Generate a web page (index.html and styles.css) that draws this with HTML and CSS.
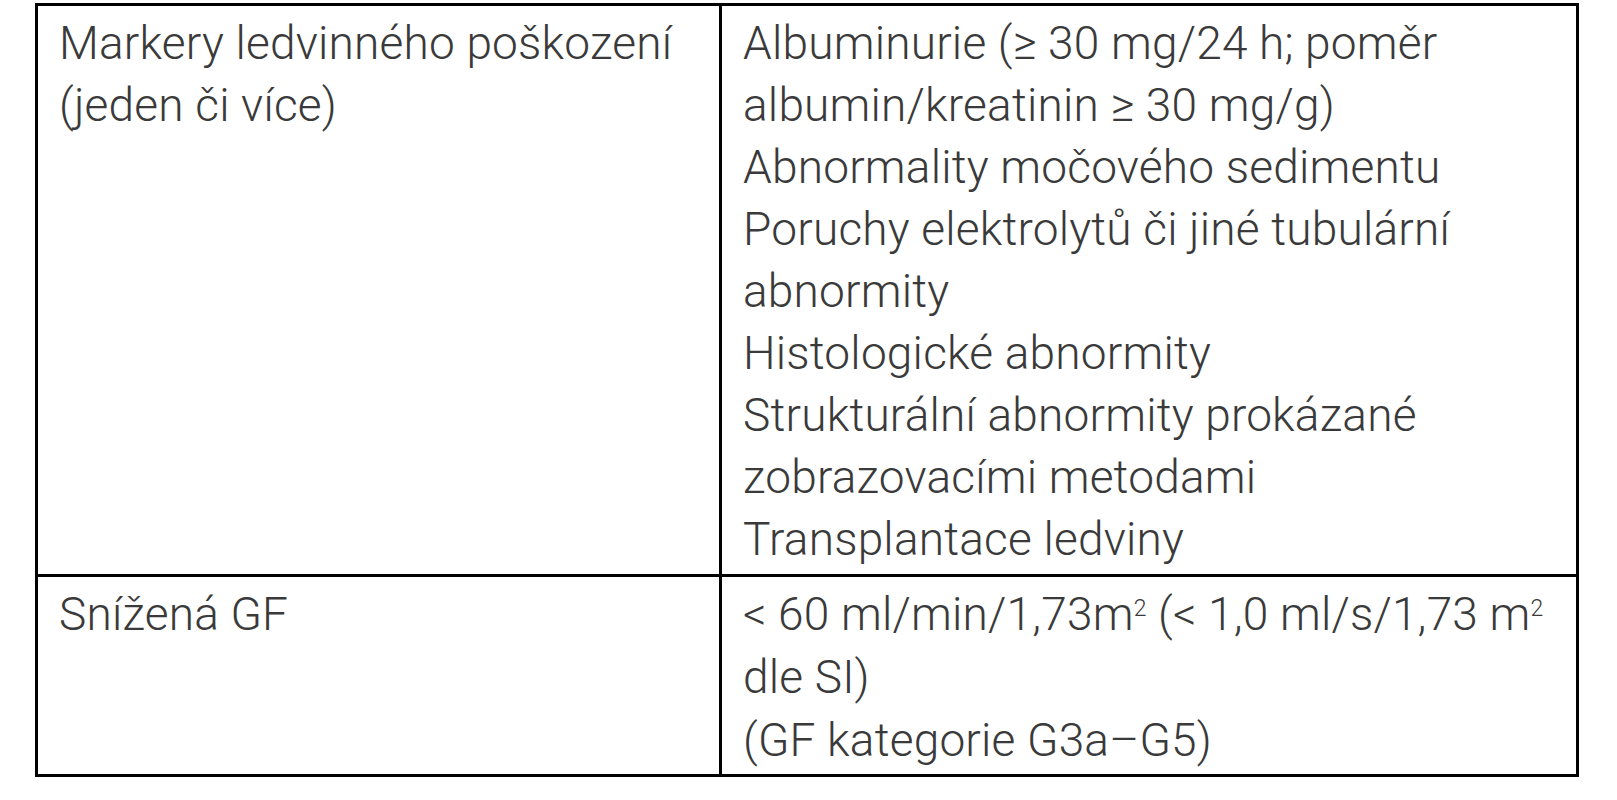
FILE: index.html
```html
<!DOCTYPE html>
<html lang="cs">
<head>
<meta charset="utf-8">
<title>Kritéria CKD</title>
<link rel="stylesheet" href="styles.css">
</head>
<body>
<table class="criteria">
  <tr>
    <td class="label">Markery ledvinného poškození (jeden či více)</td>
    <td class="values">
      <div class="item">Albuminurie (≥ 30 mg/24 h; poměr albumin/kreatinin ≥ 30 mg/g)</div>
      <div class="item">Abnormality močového sedimentu</div>
      <div class="item">Poruchy elektrolytů či jiné tubulární abnormity</div>
      <div class="item">Histologické abnormity</div>
      <div class="item">Strukturální abnormity prokázané zobrazovacími metodami</div>
      <div class="item">Transplantace ledviny</div>
    </td>
  </tr>
  <tr class="second">
    <td class="label">Snížená GF</td>
    <td class="values">
      <div class="item">&lt; 60 ml/min/1,73m<sup>2</sup> (&lt; 1,0 ml/s/1,73 m<sup>2</sup> <span class="nowrap">dle SI)</span></div>
      <div class="item">(GF kategorie G3a–G5)</div>
    </td>
  </tr>
</table>
</body>
</html>
```

FILE: styles.css
```css
html, body {
  margin: 0;
  padding: 0;
  background: #ffffff;
}

body {
  padding: 3px 0 0 35px;
  font-family: Roboto, "Liberation Sans", sans-serif;
  font-weight: 300;
  color: #3a3a3a;
}

.criteria {
  border-collapse: collapse;
  width: 1544px;
}

.criteria td {
  border: 3px solid #000;
  vertical-align: top;
  font-size: 46px;
  letter-spacing: 0.2px;
  line-height: 62px;
  padding: 6px 20px 4px 21px;
}

.criteria .second td {
  line-height: 63px;
  padding-bottom: 2px;
}

.criteria .label {
  width: 640px;
}

.criteria sup {
  font-size: 0.5em;
  line-height: 0.5;
  vertical-align: 0.62em;
}

.nowrap {
  white-space: nowrap;
}
```
